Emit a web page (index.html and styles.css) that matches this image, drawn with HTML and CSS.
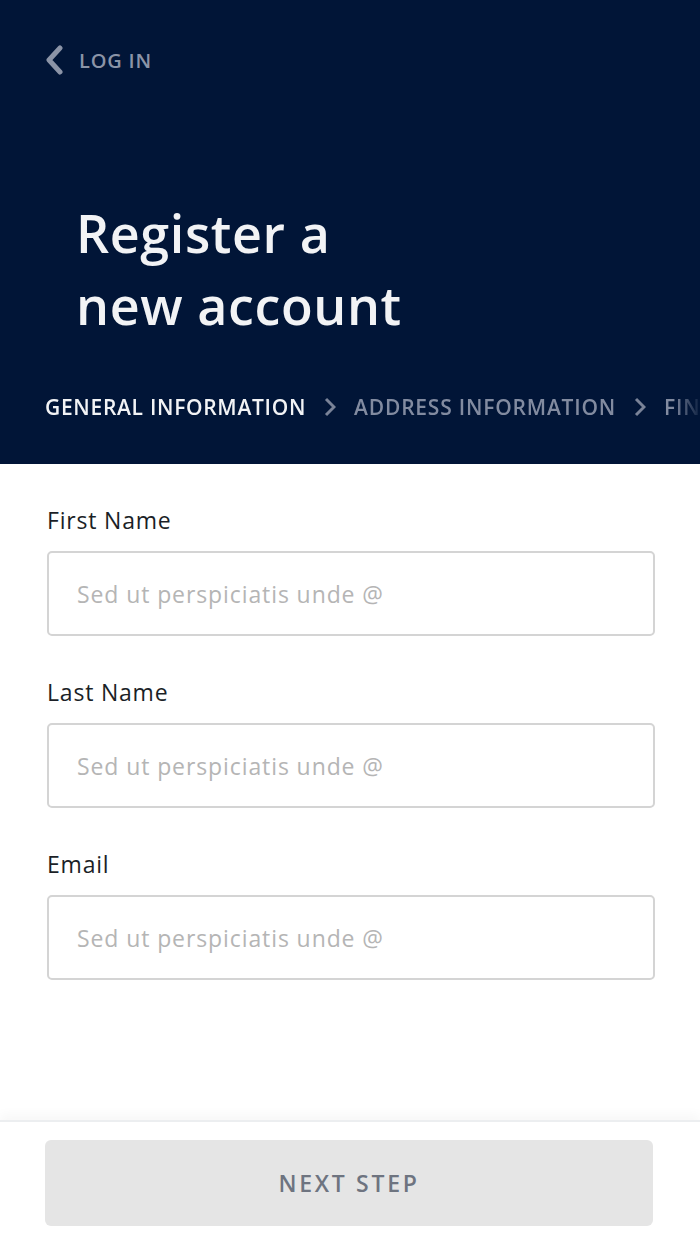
FILE: index.html
```html
<!DOCTYPE html>
<html lang="en">
<head>
    <meta charset="UTF-8">
    <meta name="viewport" content="width=device-width, initial-scale=1.0">
    <title>Register</title>
    <link rel="stylesheet" href="styles.css">
</head>
<body>

<div class="page">
    <header class="hero">
        <a class="back" href="#">
            <svg width="18" height="30" viewBox="0 0 18 30"><path d="M15 3 L4 15 L15 27" fill="none" stroke="currentColor" stroke-width="5" stroke-linecap="round" stroke-linejoin="round"/></svg>
            <span>LOG IN</span>
        </a>

        <h1>Register a<br>new account</h1>

        <div class="steps">
            <span class="step active">GENERAL INFORMATION</span>
            <svg class="sep" width="12" height="20" viewBox="0 0 12 20"><path d="M2 2 L10 10 L2 18" fill="none" stroke="currentColor" stroke-width="3"/></svg>
            <span class="step">ADDRESS INFORMATION</span>
            <svg class="sep" width="12" height="20" viewBox="0 0 12 20"><path d="M2 2 L10 10 L2 18" fill="none" stroke="currentColor" stroke-width="3"/></svg>
            <span class="step">FINISH</span>
        </div>
    </header>

    <form class="form">
        <label class="field">
            <span class="label">First Name</span>
            <input type="text" placeholder="Sed ut perspiciatis unde @">
        </label>
        <label class="field">
            <span class="label">Last Name</span>
            <input type="text" placeholder="Sed ut perspiciatis unde @">
        </label>
        <label class="field">
            <span class="label">Email</span>
            <input type="email" placeholder="Sed ut perspiciatis unde @">
        </label>
    </form>

    <footer class="footer">
        <button type="button" class="next" disabled>NEXT STEP</button>
    </footer>
</div>

</body>
</html>
```

FILE: styles.css
```css
body {
    margin: 0;
    font-family: "Open Sans", Lato, sans-serif;
    background: #fff;
    color: #1b1f27;
}
.page {
    min-height: 1245px;
    display: flex;
    flex-direction: column;
}
.hero {
    background-color: #011537;
    height: 464px;
    box-sizing: border-box;
    padding: 45px 0 0 45px;
    overflow: hidden;
}
.back {
    display: flex;
    align-items: center;
    gap: 16px;
    color: #8b94a7;
    text-decoration: none;
    font-size: 20px;
    font-weight: 600;
    letter-spacing: 0.8px;
}
.back svg {
    flex: none;
}
h1 {
    margin: 122px 0 0 31px;
    color: #f2f3f5;
    font-size: 52px;
    font-weight: 600;
    line-height: 72px;
    letter-spacing: 0.6px;
}
.steps {
    margin-top: 52px;
    display: flex;
    align-items: center;
    gap: 18px;
    white-space: nowrap;
    font-size: 21px;
    font-weight: 600;
    letter-spacing: 0.8px;
    color: #828ba0;
    -webkit-mask-image: linear-gradient(to right, #000 628px, transparent 658px);
    mask-image: linear-gradient(to right, #000 628px, transparent 658px);
}
.step.active {
    color: #f2f3f5;
    letter-spacing: 0.7px;
}
.sep {
    flex: none;
    color: #7a8398;
}
.form {
    padding: 41px 45px 0 47px;
    display: flex;
    flex-direction: column;
    gap: 41px;
}
.field {
    display: flex;
    flex-direction: column;
    gap: 16px;
}
.label {
    font-size: 23px;
    font-weight: 500;
    line-height: 30px;
    letter-spacing: 0.8px;
    color: #1b1f27;
}
.field input {
    height: 85px;
    box-sizing: border-box;
    border: 2px solid #d4d4d4;
    border-radius: 5px;
    padding: 0 28px;
    font-family: inherit;
    font-size: 23px;
    letter-spacing: 0.9px;
    color: #1b1f27;
    outline: none;
}
.field input::placeholder {
    color: #b5b5b5;
}
.footer {
    margin-top: auto;
    border-top: 2px solid #eceef0;
    box-shadow: 0 -6px 10px rgba(0, 0, 0, 0.03);
    padding: 18px 47px 19px 45px;
}
.next {
    width: 100%;
    height: 86px;
    border: none;
    border-radius: 6px;
    background-color: #e5e5e5;
    color: #6e7480;
    font-family: inherit;
    font-size: 23px;
    font-weight: 600;
    letter-spacing: 2.7px;
}
```
